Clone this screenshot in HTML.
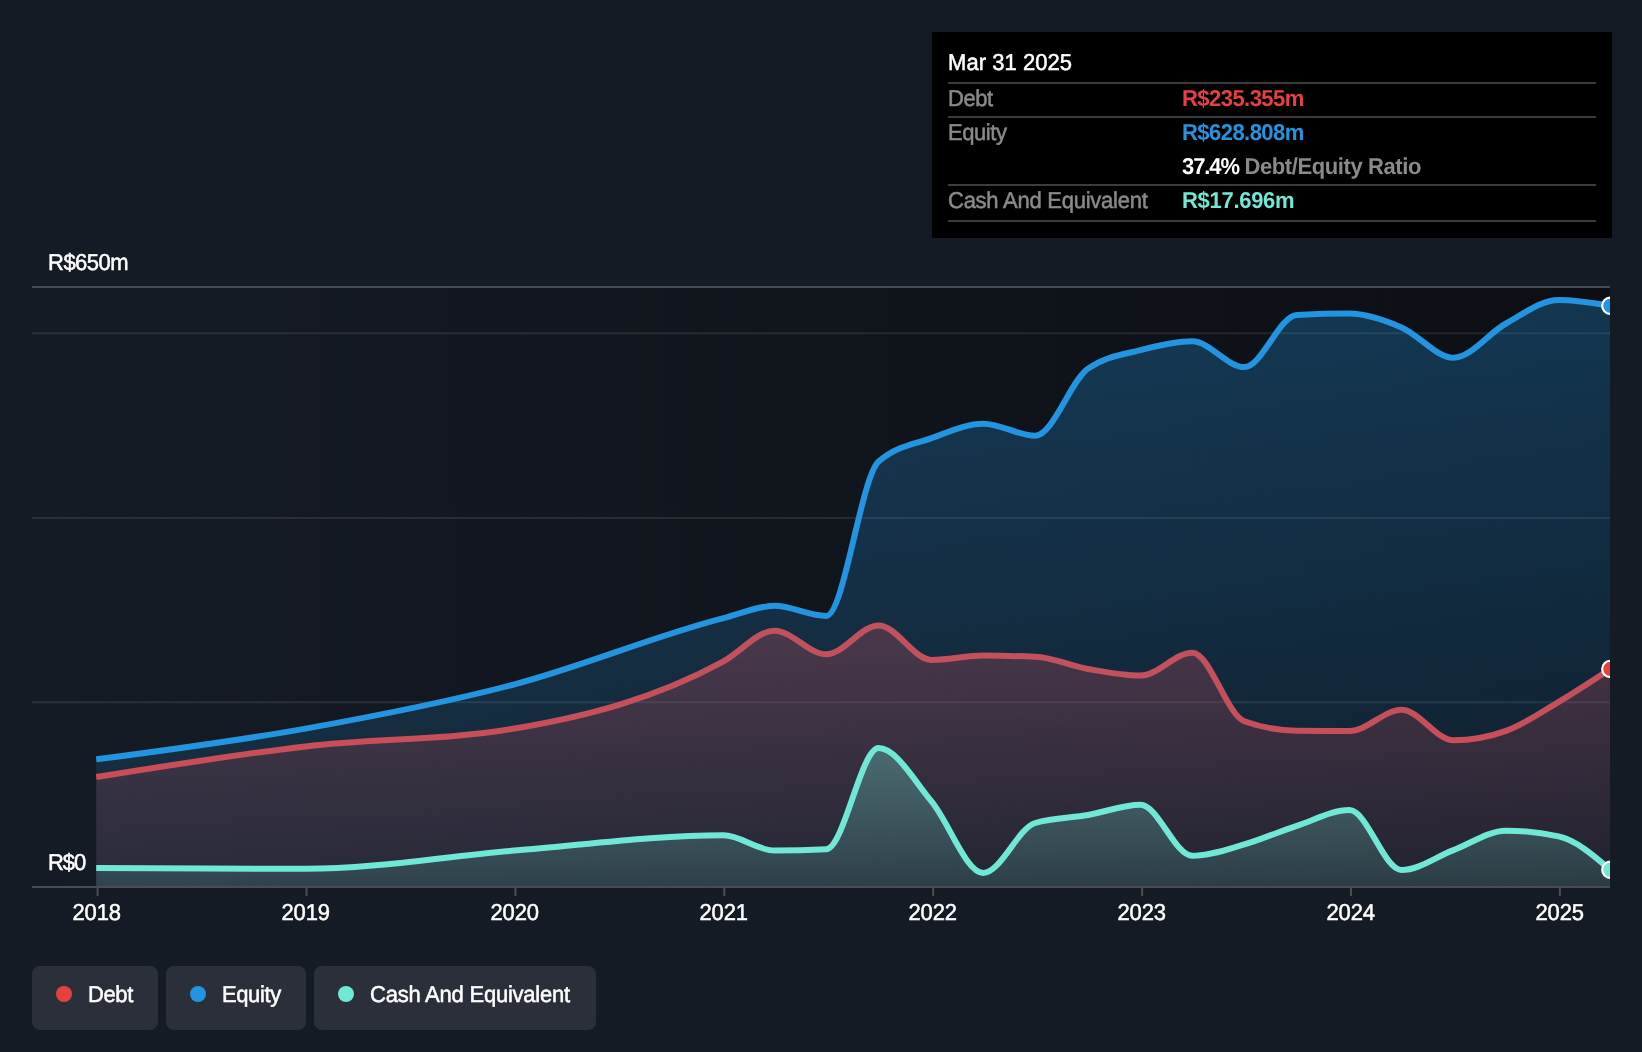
<!DOCTYPE html>
<html><head><meta charset="utf-8"><title>Debt to Equity History</title>
<style>
html,body{margin:0;padding:0;}
body{text-rendering:geometricPrecision;width:1642px;height:1052px;background:#151b24;overflow:hidden;position:relative;
 font-family:"Liberation Sans",sans-serif;color:#fff;font-size:22px;}
svg{position:absolute;left:0;top:0;}
#ov{position:absolute;left:0;top:0;width:1642px;height:1052px;will-change:transform;}
.tx{-webkit-text-stroke:0.5px currentColor;}
.tx,.v{transform:scaleY(1.045);transform-origin:0 20.6px;}
.xl.tx{transform-origin:50% 20.6px;}
.yl{position:absolute;left:48px;font-size:22px;line-height:26px;white-space:nowrap;letter-spacing:-0.5px;}
.xl{position:absolute;top:899.5px;width:80px;text-align:center;font-size:22px;line-height:26px;letter-spacing:-0.15px;}
#tip{position:absolute;left:932px;top:32px;width:680px;height:206px;background:#000;}
#tip .t{position:absolute;left:16px;top:18px;font-size:22px;line-height:26px;letter-spacing:0.05px;white-space:nowrap;}
#tip .ln{position:absolute;left:16px;width:648px;height:2px;background:#3c3c3c;}
#tip .lb{position:absolute;left:16px;color:#8a8a8a;font-size:22px;line-height:26px;white-space:nowrap;letter-spacing:-0.45px;}
#tip .v{position:absolute;left:250px;font-weight:bold;font-size:22px;line-height:26px;white-space:nowrap;letter-spacing:-0.55px;}
.lg{position:absolute;top:966px;height:64px;background:#2b2f39;border-radius:8px;}
.lg i{position:absolute;left:24px;top:20px;width:16px;height:16px;border-radius:50%;}
.lg span{position:absolute;left:56px;top:15.6px;font-size:22px;line-height:26px;white-space:nowrap;letter-spacing:-0.4px;}
</style></head><body>
<svg width="1642" height="1052" viewBox="0 0 1642 1052">
<defs>
<linearGradient id="bg" x1="0" x2="1" y1="0" y2="0">
 <stop offset="0" stop-color="#151b24"/><stop offset="1" stop-color="#0c0e14"/>
</linearGradient>
<linearGradient id="ge" x1="0" x2="0" y1="300" y2="887" gradientUnits="userSpaceOnUse">
 <stop offset="0" stop-color="#2394df" stop-opacity="0.30"/><stop offset="1" stop-color="#2394df" stop-opacity="0.11"/>
</linearGradient>
<linearGradient id="gd" x1="0" x2="0" y1="625" y2="887" gradientUnits="userSpaceOnUse">
 <stop offset="0" stop-color="#e64141" stop-opacity="0.31"/><stop offset="1" stop-color="#e64141" stop-opacity="0.09"/>
</linearGradient>
<linearGradient id="gc" x1="0" x2="0" y1="749" y2="887" gradientUnits="userSpaceOnUse">
 <stop offset="0" stop-color="#71e7d6" stop-opacity="0.32"/><stop offset="1" stop-color="#71e7d6" stop-opacity="0.13"/>
</linearGradient>
<clipPath id="cp"><rect x="96" y="280" width="1514" height="608"/></clipPath>
</defs>
<rect x="32" y="287" width="1578" height="601" fill="url(#bg)"/>
<g stroke="#ffffff" stroke-opacity="0.095" stroke-width="2">
 <line x1="32" x2="1610" y1="333.2" y2="333.2"/>
 <line x1="32" x2="1610" y1="518" y2="518"/>
 <line x1="32" x2="1610" y1="702.3" y2="702.3"/>
</g>
<line x1="32" x2="1610" y1="287" y2="287" stroke="#474b51" stroke-width="2"/>
<g clip-path="url(#cp)">
 <path d="M96.20,777.10C165.97,765.80,235.73,754.50,305.50,746.40C375.17,738.31,444.83,740.43,514.50,728.50C584.17,716.57,653.83,699.50,723.50,661.40C740.50,652.10,757.50,630.70,774.50,630.70C791.77,630.70,809.03,654.30,826.30,654.30C843.73,654.30,861.17,625.40,878.60,625.40C896.23,625.40,913.87,659.90,931.50,659.90C948.77,659.90,966.03,655.60,983.30,655.60C1000.60,655.60,1017.90,656.00,1035.20,656.80C1052.80,657.61,1070.40,665.86,1088.00,669.00C1105.50,672.12,1123.00,675.60,1140.50,675.60C1157.77,675.60,1175.03,652.70,1192.30,652.70C1209.63,652.70,1226.97,714.93,1244.30,721.20C1261.80,727.53,1279.30,730.50,1296.80,730.70C1314.37,730.90,1331.93,731.00,1349.50,731.00C1366.83,731.00,1384.17,709.80,1401.50,709.80C1418.83,709.80,1436.17,740.30,1453.50,740.30C1471.00,740.30,1488.50,737.17,1506.00,730.90C1523.57,724.61,1541.13,712.26,1558.70,701.80C1575.90,691.56,1593.10,680.23,1610.30,668.90L1610.30,887.00 L96.20,887.00 Z" fill="url(#gd)"/>
 <path d="M96.20,777.10C165.97,765.80,235.73,754.50,305.50,746.40C375.17,738.31,444.83,740.43,514.50,728.50C584.17,716.57,653.83,699.50,723.50,661.40C740.50,652.10,757.50,630.70,774.50,630.70C791.77,630.70,809.03,654.30,826.30,654.30C843.73,654.30,861.17,625.40,878.60,625.40C896.23,625.40,913.87,659.90,931.50,659.90C948.77,659.90,966.03,655.60,983.30,655.60C1000.60,655.60,1017.90,656.00,1035.20,656.80C1052.80,657.61,1070.40,665.86,1088.00,669.00C1105.50,672.12,1123.00,675.60,1140.50,675.60C1157.77,675.60,1175.03,652.70,1192.30,652.70C1209.63,652.70,1226.97,714.93,1244.30,721.20C1261.80,727.53,1279.30,730.50,1296.80,730.70C1314.37,730.90,1331.93,731.00,1349.50,731.00C1366.83,731.00,1384.17,709.80,1401.50,709.80C1418.83,709.80,1436.17,740.30,1453.50,740.30C1471.00,740.30,1488.50,737.17,1506.00,730.90C1523.57,724.61,1541.13,712.26,1558.70,701.80C1575.90,691.56,1593.10,680.23,1610.30,668.90" fill="none" stroke="#e64141" stroke-width="6" stroke-linejoin="round"/>
 <path d="M96.20,759.40C165.97,750.26,235.73,741.13,305.50,728.60C375.17,716.09,444.83,702.72,514.50,684.30C584.17,665.88,653.83,635.93,723.50,618.10C740.50,613.75,757.50,605.80,774.50,605.80C791.77,605.80,809.03,615.90,826.30,615.90C843.73,615.90,861.17,477.09,878.60,461.60C896.23,445.93,913.87,444.45,931.50,438.10C948.77,431.88,966.03,423.70,983.30,423.70C1000.60,423.70,1017.90,435.70,1035.20,435.70C1052.80,435.70,1070.40,381.00,1088.00,368.60C1105.50,356.27,1123.00,354.66,1140.50,350.10C1157.77,345.60,1175.03,341.30,1192.30,341.30C1209.63,341.30,1226.97,367.10,1244.30,367.10C1261.80,367.10,1279.30,315.76,1296.80,314.90C1314.37,314.03,1331.93,313.60,1349.50,313.60C1366.83,313.60,1384.17,320.05,1401.50,327.40C1418.83,334.75,1436.17,357.70,1453.50,357.70C1471.00,357.70,1488.50,333.11,1506.00,323.50C1523.57,313.86,1541.13,300.00,1558.70,300.00C1575.90,300.00,1593.10,302.90,1610.30,305.80L1610.30,887.00 L96.20,887.00 Z" fill="url(#ge)"/>
 <path d="M96.20,759.40C165.97,750.26,235.73,741.13,305.50,728.60C375.17,716.09,444.83,702.72,514.50,684.30C584.17,665.88,653.83,635.93,723.50,618.10C740.50,613.75,757.50,605.80,774.50,605.80C791.77,605.80,809.03,615.90,826.30,615.90C843.73,615.90,861.17,477.09,878.60,461.60C896.23,445.93,913.87,444.45,931.50,438.10C948.77,431.88,966.03,423.70,983.30,423.70C1000.60,423.70,1017.90,435.70,1035.20,435.70C1052.80,435.70,1070.40,381.00,1088.00,368.60C1105.50,356.27,1123.00,354.66,1140.50,350.10C1157.77,345.60,1175.03,341.30,1192.30,341.30C1209.63,341.30,1226.97,367.10,1244.30,367.10C1261.80,367.10,1279.30,315.76,1296.80,314.90C1314.37,314.03,1331.93,313.60,1349.50,313.60C1366.83,313.60,1384.17,320.05,1401.50,327.40C1418.83,334.75,1436.17,357.70,1453.50,357.70C1471.00,357.70,1488.50,333.11,1506.00,323.50C1523.57,313.86,1541.13,300.00,1558.70,300.00C1575.90,300.00,1593.10,302.90,1610.30,305.80" fill="none" stroke="#2394df" stroke-width="6" stroke-linejoin="round"/>
 <path d="M96.20,868.10C165.97,868.45,235.73,868.80,305.50,868.80C375.17,868.80,444.83,856.18,514.50,850.60C584.17,845.02,653.83,835.30,723.50,835.30C740.50,835.30,757.50,850.60,774.50,850.60C791.77,850.60,809.03,850.13,826.30,849.20C843.73,848.26,861.17,748.10,878.60,748.10C896.23,748.10,913.87,780.31,931.50,801.40C948.77,822.05,966.03,872.90,983.30,872.90C1000.60,872.90,1017.90,828.24,1035.20,823.00C1052.80,817.67,1070.40,818.06,1088.00,815.00C1105.50,811.96,1123.00,804.70,1140.50,804.70C1157.77,804.70,1175.03,855.80,1192.30,855.80C1209.63,855.80,1226.97,849.36,1244.30,844.40C1261.80,839.39,1279.30,831.51,1296.80,825.80C1314.37,820.07,1331.93,810.10,1349.50,810.10C1366.83,810.10,1384.17,870.00,1401.50,870.00C1418.83,870.00,1436.17,856.62,1453.50,850.10C1471.00,843.52,1488.50,830.70,1506.00,830.70C1523.57,830.70,1541.13,832.60,1558.70,836.40C1575.90,840.12,1593.10,854.96,1610.30,869.80L1610.30,887.00 L96.20,887.00 Z" fill="url(#gc)"/>
 <path d="M96.20,868.10C165.97,868.45,235.73,868.80,305.50,868.80C375.17,868.80,444.83,856.18,514.50,850.60C584.17,845.02,653.83,835.30,723.50,835.30C740.50,835.30,757.50,850.60,774.50,850.60C791.77,850.60,809.03,850.13,826.30,849.20C843.73,848.26,861.17,748.10,878.60,748.10C896.23,748.10,913.87,780.31,931.50,801.40C948.77,822.05,966.03,872.90,983.30,872.90C1000.60,872.90,1017.90,828.24,1035.20,823.00C1052.80,817.67,1070.40,818.06,1088.00,815.00C1105.50,811.96,1123.00,804.70,1140.50,804.70C1157.77,804.70,1175.03,855.80,1192.30,855.80C1209.63,855.80,1226.97,849.36,1244.30,844.40C1261.80,839.39,1279.30,831.51,1296.80,825.80C1314.37,820.07,1331.93,810.10,1349.50,810.10C1366.83,810.10,1384.17,870.00,1401.50,870.00C1418.83,870.00,1436.17,856.62,1453.50,850.10C1471.00,843.52,1488.50,830.70,1506.00,830.70C1523.57,830.70,1541.13,832.60,1558.70,836.40C1575.90,840.12,1593.10,854.96,1610.30,869.80" fill="none" stroke="#71e7d6" stroke-width="6" stroke-linejoin="round"/>
 <circle cx="1610.3" cy="305.8" r="8.15" fill="#2394df" stroke="#fff" stroke-width="2.1"/>
 <circle cx="1610.3" cy="668.9" r="8.15" fill="#e64141" stroke="#fff" stroke-width="2.1"/>
 <circle cx="1610.3" cy="869.8000000000001" r="8.15" fill="#71e7d6" stroke="#fff" stroke-width="2.1"/>
</g>
<line x1="32" x2="1610" y1="887" y2="887" stroke="#494d52" stroke-width="2"/>
<rect x="96.55" y="887" width="2.1" height="9" fill="#494d52"/><rect x="305.45" y="887" width="2.1" height="9" fill="#494d52"/><rect x="514.35" y="887" width="2.1" height="9" fill="#494d52"/><rect x="723.25" y="887" width="2.1" height="9" fill="#494d52"/><rect x="932.15" y="887" width="2.1" height="9" fill="#494d52"/><rect x="1141.05" y="887" width="2.1" height="9" fill="#494d52"/><rect x="1349.95" y="887" width="2.1" height="9" fill="#494d52"/><rect x="1558.85" y="887" width="2.1" height="9" fill="#494d52"/>
</svg>
<div id="ov">
<div class="yl tx" style="top:249.5px">R$650m</div>
<div class="yl tx" style="top:849.5px;letter-spacing:-1.1px">R$0</div>
<div class="xl tx" style="left:56.7px">2018</div><div class="xl tx" style="left:265.7px">2019</div><div class="xl tx" style="left:474.7px">2020</div><div class="xl tx" style="left:683.7px">2021</div><div class="xl tx" style="left:892.7px">2022</div><div class="xl tx" style="left:1101.7px">2023</div><div class="xl tx" style="left:1310.7px">2024</div><div class="xl tx" style="left:1519.7px">2025</div>
<div id="tip">
 <div class="t tx">Mar 31 2025</div>
 <div class="ln" style="top:50px"></div>
 <div class="lb tx" style="top:54px">Debt</div><div class="v" style="top:54px;color:#e64141">R$235.355m</div>
 <div class="ln" style="top:84px"></div>
 <div class="lb tx" style="top:88px">Equity</div><div class="v" style="top:88px;color:#2394df">R$628.808m</div>
 <div class="v" style="top:122px;color:#fff"><span style="letter-spacing:-1.1px">37.4%</span> <span style="color:#8a8a8a;letter-spacing:-0.4px">Debt/Equity Ratio</span></div>
 <div class="ln" style="top:152px"></div>
 <div class="lb tx" style="top:156px;letter-spacing:-0.25px">Cash And Equivalent</div><div class="v" style="top:156px;color:#71e7d6;letter-spacing:-0.3px">R$17.696m</div>
 <div class="ln" style="top:188px"></div>
</div>
<div class="lg" style="left:32px;width:126px"><i style="background:#e64141"></i><span class="tx">Debt</span></div>
<div class="lg" style="left:166px;width:140px"><i style="background:#2394df"></i><span class="tx">Equity</span></div>
<div class="lg" style="left:314px;width:282px"><i style="background:#71e7d6"></i><span class="tx" style="letter-spacing:-0.23px">Cash And Equivalent</span></div>
</div>
</body></html>
